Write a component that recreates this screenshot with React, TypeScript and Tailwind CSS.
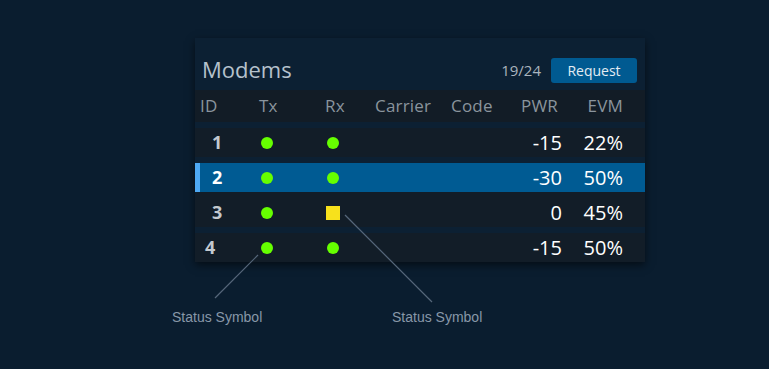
type Status = "ok" | "warn";

type Modem = {
  id: number;
  tx: Status;
  rx: Status;
  pwr: string;
  evm: string;
};

const modems: Modem[] = [
  { id: 1, tx: "ok", rx: "ok", pwr: "-15", evm: "22%" },
  { id: 2, tx: "ok", rx: "ok", pwr: "-30", evm: "50%" },
  { id: 3, tx: "ok", rx: "warn", pwr: "0", evm: "45%" },
  { id: 4, tx: "ok", rx: "ok", pwr: "-15", evm: "50%" }
];

const SELECTED = 2;

function StatusSymbol({ status }: { status: Status }) {
  if (status === "warn") return <span className="block h-[14px] w-[14px] bg-[#f7e11c]" />;
  return <span className="block h-3 w-3 rounded-full bg-[#66ff00]" />;
}

function ModemRow({ modem }: { modem: Modem }) {
  const selected = modem.id === SELECTED;
  // row 3 sits flush with the selected row above, so its spacer takes the row colour
  const spacer = modem.id === 3 ? "bg-[#121d28]" : "bg-transparent";
  const idPad = modem.id === 4 ? "pl-[10px]" : "pl-[17px]";

  return (
    <div className={`flex h-[35px] flex-col ${spacer}`}>
      <div className="h-[6px]" />
      <div
        className={`relative flex h-[29px] items-center ${
          selected ? "bg-[#005b93] text-white" : "bg-[#121d28] text-[#c3c9cf]"
        }`}
      >
        {selected ? <span className="absolute left-0 top-0 h-full w-[5px] bg-[#4ea9f4]" /> : null}
        <span className={`w-[45px] text-[18px] font-bold ${idPad}`}>{modem.id}</span>
        <span className="flex w-[54px] justify-center">
          <StatusSymbol status={modem.tx} />
        </span>
        <span className="flex w-[77px] justify-center">
          <StatusSymbol status={modem.rx} />
        </span>
        <span className="w-[76px]" />
        <span className="w-[53px]" />
        <span className="w-[62px] text-right text-[20px] text-white">{modem.pwr}</span>
        <span className="w-[61px] text-right text-[20px] text-white">{modem.evm}</span>
      </div>
    </div>
  );
}

export default function App() {
  return (
    <div className="relative h-[369px] w-[769px] overflow-hidden bg-[#0a1d2f] pl-[195px] pt-[38px] font-['Open_Sans',sans-serif]">
      <section className="w-[450px] bg-[#0c2033] shadow-[0_3px_8px_rgba(0,0,0,0.55)]">
        <div className="flex h-[52px] items-end justify-between pb-[7px] pl-[7px] pr-[8px]">
          <h1 className="mb-[1px] text-[22px] leading-[25px] text-[#b5c1cc]">Modems</h1>
          <div className="flex items-center gap-[10px]">
            <span className="text-[15px] text-[#aab4be]">19/24</span>
            <button
              type="button"
              className="h-[25px] w-[86px] rounded-[3px] bg-[#005a91] text-[14px] text-[#e4ecf3]"
            >
              Request
            </button>
          </div>
        </div>

        <div className="flex h-[32px] items-center bg-[#121c26] text-[17px] tracking-[0.2px] text-[#8a949d]">
          <span className="w-[45px] pl-[5px]">ID</span>
          <span className="w-[54px] pl-[19px]">Tx</span>
          <span className="w-[77px] pl-[31px]">Rx</span>
          <span className="w-[76px] pl-[4px]">Carrier</span>
          <span className="w-[53px] pl-[4px]">Code</span>
          <span className="w-[62px] pr-[4px] text-right">PWR</span>
          <span className="w-[61px] text-right">EVM</span>
        </div>

        {modems.map((modem) => (
          <ModemRow key={modem.id} modem={modem} />
        ))}
      </section>

      {/* callouts pointing at the status symbols */}
      <svg className="absolute left-0 top-0" width="769" height="369" aria-hidden="true">
        <line x1="258" y1="255" x2="215" y2="298" stroke="#56677a" strokeWidth="1.2" />
        <line x1="345" y1="215" x2="432" y2="302" stroke="#56677a" strokeWidth="1.2" />
      </svg>
      <span className="absolute left-[172px] top-[307px] font-['Liberation_Sans',Arial,sans-serif] text-[14px] text-[#8797a8]">
        Status Symbol
      </span>
      <span className="absolute left-[392px] top-[307px] font-['Liberation_Sans',Arial,sans-serif] text-[14px] text-[#8797a8]">
        Status Symbol
      </span>
    </div>
  );
}
